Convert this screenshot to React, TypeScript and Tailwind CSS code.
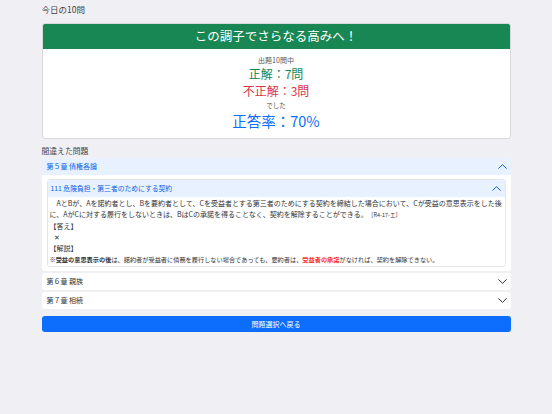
import React from "react";

const Chevron = ({ up, color }: { up?: boolean; color: string }) => (
  <svg width="9" height="5" viewBox="0 0 9 5" fill="none" stroke={color} strokeWidth="1" strokeLinecap="round" strokeLinejoin="round">
    {up ? <path d="M0.7 4.3 L4.5 0.7 L8.3 4.3" /> : <path d="M0.7 0.7 L4.5 4.3 L8.3 0.7" />}
  </svg>
);

export default function App() {
  return (
    <div
      className="min-h-[414px] w-full bg-[#efeff4] text-[#212529]"
      style={{ fontFamily: '"Noto Sans CJK JP", "Noto Sans", sans-serif' }}
    >
      <div className="mx-auto w-[469px] pt-[3px]">
        <div className="text-[8.5px] leading-[12px] text-[#444]">今日の10問</div>
        <div className="mt-[8px] overflow-hidden rounded-[3px] border border-[#d8d8d8] bg-white">
          <div className="flex h-[25px] items-center justify-center bg-[#198754] text-[12.5px] text-white">
            この調子でさらなる高みへ！
          </div>
          <div className="flex flex-col items-center pt-[6px] pb-[6px]">
            <div className="text-[7px] leading-[10px] text-[#555]">出題10問中</div>
            <div className="text-[12px] leading-[17px] text-[#198754]">正解：7問</div>
            <div className="text-[12px] leading-[18px] text-[#dc3545]">不正解：3問</div>
            <div className="text-[6.5px] leading-[10px] text-[#555]">でした</div>
            <div className="text-[14.5px] leading-[22px] text-[#0d6efd]">正答率：70%</div>
          </div>
        </div>
        <div className="mt-[7px] text-[7.8px] leading-[10px] text-[#444]">間違えた問題</div>
        <div className="mt-[2px] flex flex-col gap-[2px]">
          <div className="overflow-hidden rounded-[3px] bg-white">
            <div className="flex h-[17px] items-center justify-between bg-[#e7f1ff] pl-[5px] pr-[4px] text-[7px] text-[#0c63e4]">
              <span>第５章 債権各論</span>
              <Chevron up color="#0c63e4" />
            </div>
            <div className="px-[5px] pt-[4px] pb-[4px]">
              <div className="overflow-hidden rounded-[3px] border border-[#e6e6e6] bg-white">
                <div className="flex h-[17px] items-center justify-between bg-[#e7f1ff] pl-[3px] pr-[4px] text-[6.8px] text-[#0c63e4]">
                  <span>111 危険負担・第三者のためにする契約</span>
                  <Chevron up color="#0c63e4" />
                </div>
                <div className="px-[2px] pt-[1px] pb-[1px] text-[7px] leading-[11px] text-[#333]">
                  <p>
                    {"\u3000"}AとBが、Aを諾約者とし、Bを要約者として、Cを受益者とする第三者のためにする契約を締結した場合において、Cが受益の意思表示をした後に、AがCに対する履行をしないときは、BはCの承諾を得ることなく、契約を解除することができる。
                    <span className="ml-[3px] text-[5.5px] leading-none">［R4-17-エ］</span>
                  </p>
                  <p className="mt-[1px]">【答え】</p>
                  <p className="pl-[4px]">✕</p>
                  <p>【解説】</p>
                  <p className="text-[6.2px]">
                    ※<b>受益の意思表示の後</b>は、諾約者が受益者に債務を履行しない場合であっても、要約者は、
                    <b className="text-[#ff3030]">受益者の承諾</b>がなければ、契約を解除できない。
                  </p>
                </div>
              </div>
            </div>
          </div>
          <div className="flex h-[17px] items-center justify-between rounded-[3px] bg-white pl-[5px] pr-[4px] text-[7px] text-[#333]">
            <span>第６章 親族</span>
            <Chevron color="#333" />
          </div>
          <div className="flex h-[17px] items-center justify-between rounded-[3px] bg-white pl-[5px] pr-[4px] text-[7px] text-[#333]">
            <span>第７章 相続</span>
            <Chevron color="#333" />
          </div>
        </div>
        <button className="mt-[7px] flex h-[16px] w-full items-center justify-center rounded-[3px] bg-[#0d6efd] text-[7px] text-white">
          問題選択へ戻る
        </button>
      </div>
    </div>
  );
}
